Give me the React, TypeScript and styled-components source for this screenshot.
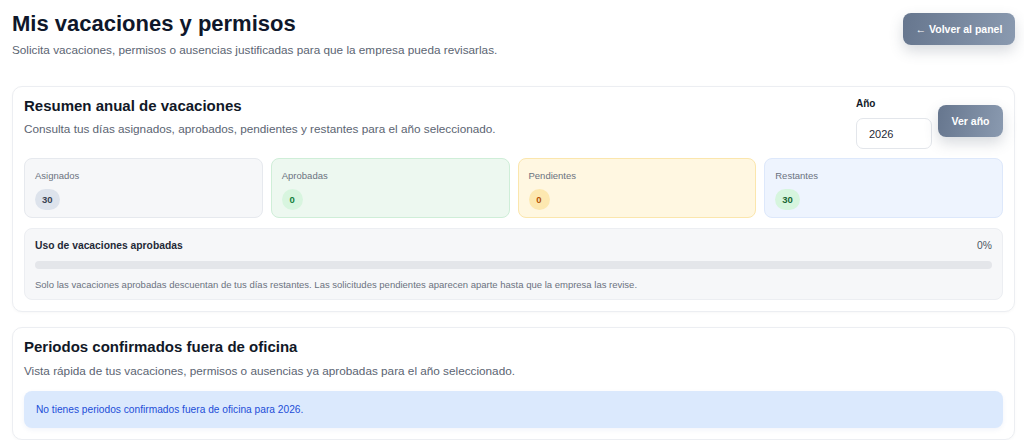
import styled, { createGlobalStyle } from "styled-components";

const GlobalStyle = createGlobalStyle`
  html, body {
    margin: 0;
    padding: 0;
    background: #ffffff;
    font-family: "Liberation Sans", Arial, sans-serif;
    color: #111827;
  }
  * {
    box-sizing: border-box;
  }
`;

const Page = styled.main`
  padding: 10px 9px 0 12px;
  display: flex;
  flex-direction: column;
`;

const Header = styled.header`
  display: flex;
  justify-content: space-between;
  align-items: flex-start;
  height: 58px;
`;

const PageTitle = styled.h1`
  margin: 0;
  font-size: 22px;
  line-height: 28px;
  font-weight: 700;
  color: #0f172a;
`;

const PageSubtitle = styled.p`
  margin: 4px 0 0;
  font-size: 11.75px;
  line-height: 16px;
  color: #5b6472;
`;

const GradientButton = styled.button<{ $width: number; $height: number }>`
  width: ${(p) => p.$width}px;
  height: ${(p) => p.$height}px;
  border: none;
  border-radius: 8px;
  background: linear-gradient(100deg, #66768e 0%, #8a9ab0 100%);
  color: #ffffff;
  font-family: inherit;
  font-size: 10.5px;
  font-weight: 700;
  box-shadow: 0 6px 14px rgba(71, 85, 105, 0.22);
  cursor: pointer;
`;

const BackButton = styled(GradientButton)`
  margin-top: 3px;
`;

const Card = styled.section<{ $top: number }>`
  margin-top: ${(p) => p.$top}px;
  border: 1px solid #eceef2;
  border-radius: 10px;
  background: #ffffff;
  padding: 11px;
  box-shadow: 0 1px 3px rgba(15, 23, 42, 0.03);
`;

const CardHead = styled.div`
  display: flex;
  justify-content: space-between;
  align-items: flex-start;
  height: 51px;
`;

const CardTitle = styled.h2`
  margin: 0;
  font-size: 15px;
  line-height: 16px;
  font-weight: 700;
  color: #111827;
`;

const CardText = styled.p<{ $top: number }>`
  margin: ${(p) => p.$top}px 0 0;
  font-size: 11.75px;
  line-height: 16px;
  color: #5b6472;
`;

const YearForm = styled.div`
  display: flex;
  align-items: center;
  gap: 6px;
`;

const YearField = styled.label`
  display: flex;
  flex-direction: column;
  gap: 8px;
  font-size: 10px;
  font-weight: 700;
  color: #111827;
  line-height: 12px;
`;

const YearInput = styled.input`
  width: 76px;
  height: 31px;
  border: 1px solid #e3e6eb;
  border-radius: 7px;
  padding: 0 12px;
  font-family: inherit;
  font-size: 11px;
  color: #1f2937;
  background: #ffffff;
  outline: none;
`;

const ViewButton = styled(GradientButton)`
  margin-top: -6px;
`;

const StatsGrid = styled.div`
  display: grid;
  grid-template-columns: repeat(4, 1fr);
  gap: 8px;
  margin-top: 9px;
`;

type Tone = "gray" | "green" | "amber" | "blue";

const toneBox: Record<Tone, { bg: string; border: string }> = {
  gray: { bg: "#f6f7f9", border: "#e6e9ee" },
  green: { bg: "#edf8f0", border: "#cfeed8" },
  amber: { bg: "#fff7e1", border: "#fbe6ad" },
  blue: { bg: "#eef4fe", border: "#dde8fb" },
};

const tonePill: Record<Tone, { bg: string; fg: string }> = {
  gray: { bg: "#dde3ec", fg: "#374151" },
  green: { bg: "#d8f5df", fg: "#15803d" },
  amber: { bg: "#fde8b0", fg: "#b45309" },
  blue: { bg: "#d6f5de", fg: "#166534" },
};

const StatBox = styled.div<{ $tone: Tone }>`
  height: 60px;
  border-radius: 8px;
  border: 1px solid ${(p) => toneBox[p.$tone].border};
  background: ${(p) => toneBox[p.$tone].bg};
  padding: 11px 10px 0;
  display: flex;
  flex-direction: column;
  align-items: flex-start;
  gap: 7px;
`;

const StatLabel = styled.span`
  font-size: 9.5px;
  line-height: 12px;
  color: #6b7280;
`;

const Pill = styled.span<{ $tone: Tone }>`
  min-width: 21px;
  height: 21px;
  padding: 0 7px;
  border-radius: 999px;
  display: inline-flex;
  align-items: center;
  justify-content: center;
  font-size: 9.5px;
  font-weight: 700;
  background: ${(p) => tonePill[p.$tone].bg};
  color: ${(p) => tonePill[p.$tone].fg};
`;

const UsageBox = styled.div`
  margin-top: 10px;
  height: 72px;
  border: 1px solid #eceef2;
  border-radius: 8px;
  background: #f6f7f9;
  padding: 10px 10px 0;
`;

const UsageHead = styled.div`
  display: flex;
  justify-content: space-between;
  align-items: center;
  font-size: 10.3px;
  line-height: 13px;
`;

const UsageTitle = styled.strong`
  font-weight: 700;
  color: #1f2937;
`;

const UsageValue = styled.span`
  color: #4b5563;
`;

const Track = styled.div`
  margin-top: 9px;
  height: 8px;
  border-radius: 999px;
  background: #e4e6ea;
  overflow: hidden;
`;

const Fill = styled.div`
  height: 100%;
  background: #22c55e;
`;

const UsageNote = styled.p`
  margin: 10px 0 0;
  font-size: 9.5px;
  line-height: 12px;
  color: #6b7280;
`;

const InfoBox = styled.div`
  margin-top: 12px;
  height: 37px;
  border-radius: 8px;
  background: #dbe9fd;
  display: flex;
  align-items: center;
  padding: 0 12px;
  font-size: 10.2px;
  color: #1d4ed8;
  box-shadow: 0 2px 5px rgba(30, 64, 175, 0.06);
`;

const stats: { label: string; value: number; tone: Tone }[] = [
  { label: "Asignados", value: 30, tone: "gray" },
  { label: "Aprobadas", value: 0, tone: "green" },
  { label: "Pendientes", value: 0, tone: "amber" },
  { label: "Restantes", value: 30, tone: "blue" },
];

export default function App() {
  const year = 2026;
  const used = 0;

  return (
    <>
      <GlobalStyle />
      <Page>
        <Header>
          <div>
            <PageTitle>Mis vacaciones y permisos</PageTitle>
            <PageSubtitle>
              Solicita vacaciones, permisos o ausencias justificadas para que la empresa pueda revisarlas.
            </PageSubtitle>
          </div>
          <BackButton $width={112} $height={32}>← Volver al panel</BackButton>
        </Header>

        <Card $top={18}>
          <CardHead>
            <div>
              <CardTitle>Resumen anual de vacaciones</CardTitle>
              <CardText $top={7}>
                Consulta tus días asignados, aprobados, pendientes y restantes para el año seleccionado.
              </CardText>
            </div>
            <YearForm>
              <YearField>
                Año
                <YearInput defaultValue={year} />
              </YearField>
              <ViewButton $width={65} $height={32}>Ver año</ViewButton>
            </YearForm>
          </CardHead>

          <StatsGrid>
            {stats.map((s) => (
              <StatBox key={s.label} $tone={s.tone}>
                <StatLabel>{s.label}</StatLabel>
                <Pill $tone={s.tone}>{s.value}</Pill>
              </StatBox>
            ))}
          </StatsGrid>

          <UsageBox>
            <UsageHead>
              <UsageTitle>Uso de vacaciones aprobadas</UsageTitle>
              <UsageValue>{used}%</UsageValue>
            </UsageHead>
            <Track>
              <Fill style={{ width: `${used}%` }} />
            </Track>
            <UsageNote>
              Solo las vacaciones aprobadas descuentan de tus días restantes. Las solicitudes pendientes aparecen aparte hasta que la empresa las revise.
            </UsageNote>
          </UsageBox>
        </Card>

        <Card $top={15}>
          <CardTitle>Periodos confirmados fuera de oficina</CardTitle>
          <CardText $top={8}>
            Vista rápida de tus vacaciones, permisos o ausencias ya aprobadas para el año seleccionado.
          </CardText>
          <InfoBox>No tienes periodos confirmados fuera de oficina para {year}.</InfoBox>
        </Card>
      </Page>
    </>
  );
}
